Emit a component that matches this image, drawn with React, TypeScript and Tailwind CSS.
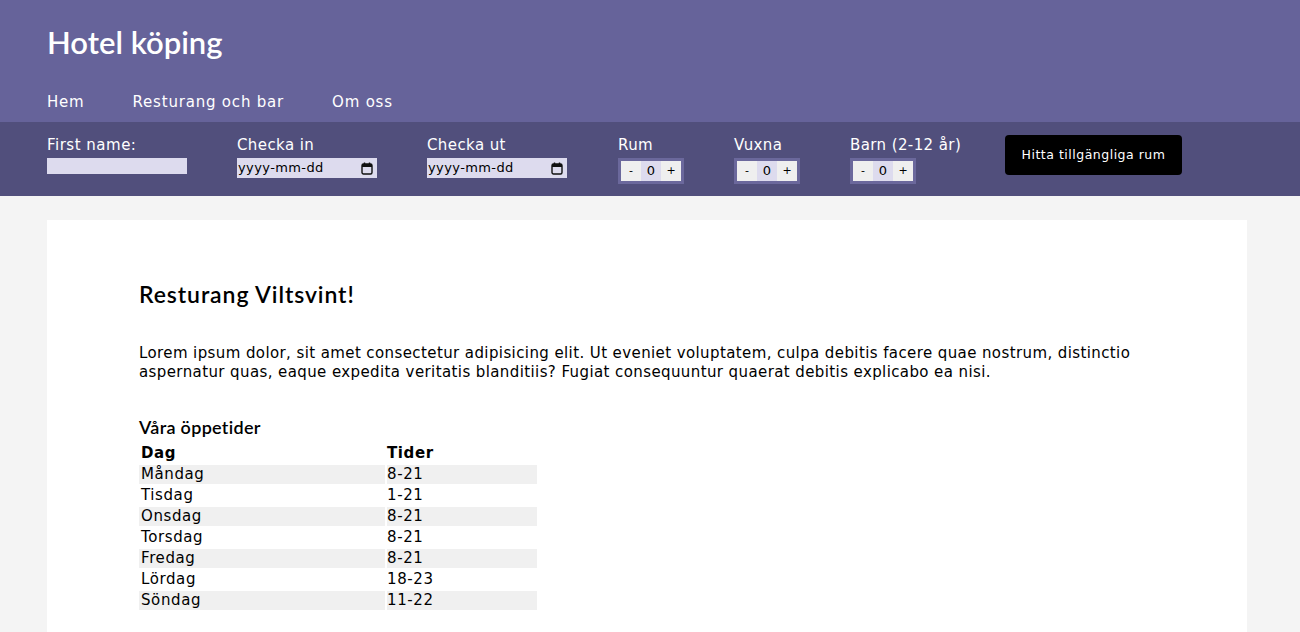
import { useState } from "react";

const body = { fontFamily: '"DejaVu Sans", "Noto Sans", sans-serif' };
const head = { fontFamily: 'Lato, "Open Sans", sans-serif' };

const hours = [
  ["Måndag", "8-21"],
  ["Tisdag", "1-21"],
  ["Onsdag", "8-21"],
  ["Torsdag", "8-21"],
  ["Fredag", "8-21"],
  ["Lördag", "18-23"],
  ["Söndag", "11-22"],
];

// small - 0 + box
const Counter = ({ label }: { label: string }) => {
  const [n, setN] = useState(0);
  return (
    <div className="w-[116px] flex flex-col">
      <span className="text-[15px] tracking-[0.4px] text-white leading-[18px]">{label}</span>
      <div className="mt-[4px] w-fit flex bg-[#6b689c] p-[3px]">
        <button onClick={() => setN(Math.max(0, n - 1))} className="w-5 h-5 bg-[#efefef] text-[11px] text-black">-</button>
        <span className="w-5 h-5 bg-[#dddbee] text-[13px] text-black flex items-center justify-center">{n}</span>
        <button onClick={() => setN(n + 1)} className="w-5 h-5 bg-[#efefef] text-[11px] text-black">+</button>
      </div>
    </div>
  );
};

const DateField = ({ label, w }: { label: string; w: string }) => (
  <div className={`${w} flex flex-col`}>
    <span className="text-[15px] tracking-[0.4px] text-white leading-[18px]">{label}</span>
    <div className="mt-[4px] w-[140px] h-5 bg-[#dddbee] flex items-center justify-between pl-[1px] pr-[4px]">
      <span className="text-[13px] tracking-[0.4px] text-black">yyyy-mm-dd</span>
      <svg width="12" height="13" viewBox="0 0 12 13" fill="none">
        <rect x="1" y="2" width="10" height="10" rx="1.5" stroke="#111" strokeWidth="1.4" />
        <rect x="1" y="2" width="10" height="3" fill="#111" />
        <line x1="3.5" y1="0.5" x2="3.5" y2="2.5" stroke="#111" strokeWidth="1.4" />
        <line x1="8.5" y1="0.5" x2="8.5" y2="2.5" stroke="#111" strokeWidth="1.4" />
      </svg>
    </div>
  </div>
);

export default function App() {
  return (
    <div className="min-h-screen bg-[#f4f4f4]" style={body}>
      <header className="bg-[#66639a] h-[122px] px-[47px] flex flex-col">
        <h1 className="text-white text-[31px] font-semibold mt-[22px] leading-[40px]" style={head}>
          Hotel köping
        </h1>
        <nav className="flex gap-[48px] mt-[29px] text-white text-[15px] tracking-[0.8px]">
          <a>Hem</a>
          <a>Resturang och bar</a>
          <a>Om oss</a>
        </nav>
      </header>

      <div className="bg-[#514f7c] h-[74px] px-[47px] flex items-start pt-[14px]">
        <div className="w-[190px] flex flex-col">
          <span className="text-[15px] tracking-[0.5px] text-white leading-[18px]">First name:</span>
          <div className="mt-[4px] w-[140px] h-4 bg-[#dddbee]" />
        </div>
        <DateField label="Checka in" w="w-[190px]" />
        <DateField label="Checka ut" w="w-[191px]" />
        <Counter label="Rum" />
        <Counter label="Vuxna" />
        <Counter label="Barn (2-12 år)" />
        <button className="ml-[39px] -mt-[1px] w-[177px] h-10 bg-black text-white text-[12.5px] tracking-[0.5px] font-medium rounded">
          Hitta tillgängliga rum
        </button>
      </div>

      <main className="pl-[47px] pr-[53px] pt-6">
        <section className="bg-white px-[92px] pt-[57px] pb-6">
          <h2 className="text-[23px] tracking-[0.9px] font-semibold text-black" style={head}>Resturang Viltsvint!</h2>
          <p className="mt-[32px] text-[15px] tracking-[0.4px] leading-[19px] text-black">
            Lorem ipsum dolor, sit amet consectetur adipisicing elit. Ut eveniet voluptatem, culpa debitis facere quae nostrum, distinctio aspernatur quas, eaque expedita veritatis blanditiis? Fugiat consequuntur quaerat debitis explicabo ea nisi.
          </p>
          <h3 className="mt-[34px] text-[18px] tracking-[0.3px] font-semibold text-black leading-[22px]" style={head}>Våra öppetider</h3>
          <table className="border-separate border-spacing-[2px] -ml-[2px] mt-[4px] text-[15px] tracking-[0.6px] text-black">
            <thead>
              <tr>
                <th className="w-[246px] text-left font-semibold px-[2px] leading-[19px]">Dag</th>
                <th className="w-[150px] text-left font-semibold px-0 leading-[19px]">Tider</th>
              </tr>
            </thead>
            <tbody>
              {hours.map(([d, t], i) => (
                <tr key={d} className={i % 2 === 0 ? "bg-[#f0f0f0]" : ""}>
                  <td className="px-[2px] leading-[19px]">{d}</td>
                  <td className="leading-[19px]">{t}</td>
                </tr>
              ))}
            </tbody>
          </table>
        </section>
      </main>
    </div>
  );
}
